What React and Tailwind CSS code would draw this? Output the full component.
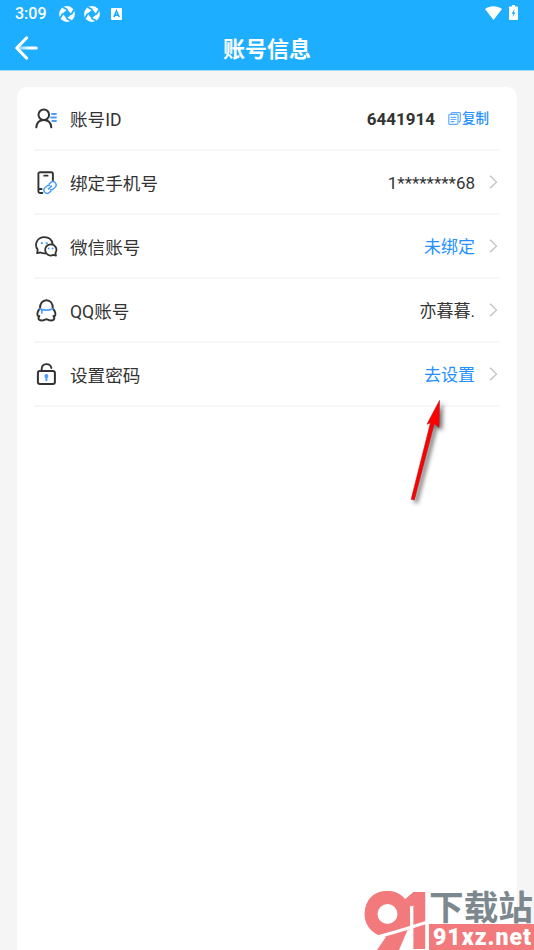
import React from 'react';

const UserIdIcon = () => (
  <svg className="w-6 h-6" viewBox="0 0 24 24" fill="none" strokeLinecap="round" aria-hidden>
    <g stroke="#333333" strokeWidth="2">
      <circle cx="9.800" cy="7.800" r="5.300" />
      <path d="M2.300 20.300c.5-4.500 3.300-7.200 7.500-7.200s7 2.700 7.500 7.200" />
    </g>
    <path d="M18 7h4M17 10.500h5M18.300 14h3.700" stroke="#4a9dfc" strokeWidth="1.800" />
  </svg>
);

const PhoneIcon = () => (
  <svg className="w-6 h-6" viewBox="0 0 24 24" fill="none" strokeLinecap="round" aria-hidden>
    <path d="M18.900 9.500V2.800a1.600 1.600 0 0 0-1.600-1.600H6a1.600 1.600 0 0 0-1.600 1.600v17.400A1.800 1.800 0 0 0 6.200 22h2.200M4.600 18h3" stroke="#333333" strokeWidth="1.900" />
    <path d="M10.200 4.700h3.400" stroke="#333333" strokeWidth="1.800" />
    <g stroke="#4a9dfc" strokeWidth="1.500" transform="rotate(-43 16 16.500)">
      <path d="M14.300 19.700h-2.200a3.200 3.200 0 0 1 0-6.400h2.600a3.200 3.200 0 0 1 2.600 1.300" />
      <path d="M17.700 13.300h2.200a3.200 3.200 0 0 1 0 6.400h-2.600a3.200 3.200 0 0 1-2.600-1.300" />
      <path d="M14 16.500h4" />
    </g>
  </svg>
);

const WechatIcon = () => (
  <svg className="w-6 h-6" viewBox="0 0 24 24" fill="none" strokeLinejoin="round" strokeLinecap="round" aria-hidden>
    <g stroke="#333333" strokeWidth="1.800">
      <path d="M12 18.300c-1.900.3-3.900.1-5.500-.8L3.100 18.200l.6-3.600C-.2 9.300 3.300 2.200 10.300 2.200c4.500 0 7.700 2.700 8.300 6.800" />
      <path d="M16.800 9.300a5.600 5.600 0 1 0 2.500 10.600l2.700.7-.6-2.500c2.600-4-.1-8.800-4.600-8.800z" fill="#fff" />
    </g>
    <g fill="#4a9dfc">
      <circle cx="7.800" cy="8.200" r="1.100" />
      <circle cx="12.800" cy="8.200" r="1.100" />
      <circle cx="14.700" cy="13.500" r="1" />
      <circle cx="18.600" cy="13.500" r="1" />
    </g>
  </svg>
);

const QQIcon = () => (
  <svg className="w-6 h-6" viewBox="0 0 24 24" fill="none" strokeLinejoin="round" strokeLinecap="round" aria-hidden>
    <path
      d="M6 9.300C6 4.400 8.500 1.300 12.400 1.300s6.400 3.100 6.400 8c1.900 2.300 2.900 5 2.500 6.800-.2 1-1 1.300-1.900.9 1 1.400 1.200 2.900.2 3.800-1.200 1-4.600.9-6-.2-.6-.4-1.800-.4-2.400 0-1.400 1.100-4.800 1.200-6 .2-1-.9-.8-2.400.2-3.800-.9.400-1.700.1-1.900-.9C3.100 14.300 4.100 11.600 6 9.300z"
      stroke="#333333"
      strokeWidth="1.900"
    />
    <path d="M6 9.900c3.800 1.500 9 1.500 12.800 0M7.800 11v3" stroke="#4a9dfc" strokeWidth="1.700" />
  </svg>
);

const LockIcon = () => (
  <svg className="w-6 h-6" viewBox="0 0 24 24" fill="none" strokeLinecap="round" aria-hidden>
    <rect x="3.900" y="8.100" width="17" height="12.800" rx="2" stroke="#333333" strokeWidth="2" />
    <path d="M7.700 7.700V5.800c.3-6.100 8.600-6.200 9.700-.8" stroke="#333333" strokeWidth="1.900" />
    <circle cx="12.400" cy="13" r="2" fill="#4a9dfc" />
    <path d="M12.400 13.500v3.800" stroke="#4a9dfc" strokeWidth="2" />
  </svg>
);

const CopyIcon = () => (
  <svg className="w-[13px] h-[13px]" viewBox="0 0 13 13" fill="none" stroke="#5fabff" aria-hidden>
    <path d="M3.300 2.200V1.600c0-.6.400-1 1-1h7c.6 0 1 .4 1 1v7.200l-1.600 1.700" strokeWidth="1.200" />
    <rect x=".8" y="2.400" width="9.200" height="10" rx="1.200" strokeWidth="1.200" />
    <path d="M2.700 5.400h5.500M2.700 7.500h5.500M2.700 9.600h3.800" strokeWidth="1.200" />
  </svg>
);

const Chevron = () => (
  <svg className="w-[9px] h-[14px] ml-[14px] mr-[2px] mb-[2px]" viewBox="0 0 9 14" fill="none" aria-hidden>
    <path d="M1 .8L7.500 7L1 13.200" stroke="#c4c4c4" strokeWidth="1.400" />
  </svg>
);

const ShutterIcon = () => (
  <svg className="w-4 h-4" viewBox="0 0 16 16" aria-hidden>
    <circle cx="8" cy="8" r="7.900" fill="#fff" />
    <path d="M8.500 3.500L12.500 8.500L7.500 12.500L3.500 7.500z" fill="#1eaeff" />
    <path d="M8.500 3.800L4 1.200M12.200 8.500L14.800 4M7.500 12.200L12 14.800M3.800 7.500L1.200 12" stroke="#1eaeff" strokeWidth="1.700" />
  </svg>
);

const rows = [
  { icon: <PhoneIcon />, label: '绑定手机号', value: '1********68' },
  { icon: <WechatIcon />, label: '微信账号', value: '未绑定', action: true },
  { icon: <QQIcon />, label: 'QQ账号', value: '亦暮暮.' },
  { icon: <LockIcon />, label: '设置密码', value: '去设置', action: true },
];

function StatusBar() {
  return (
    <div className="flex items-center h-7 pl-[15px] pr-[15px] text-white">
      <span className="w-[32px] text-[16px] font-medium leading-7">3:09</span>
      <div className="flex items-center gap-[9px] ml-3">
        <ShutterIcon />
        <ShutterIcon />
      </div>
      <svg className="w-[11px] h-3 ml-[11px]" viewBox="0 0 11 12" aria-hidden>
        <rect width="11" height="12" rx="1" fill="#fff" />
        <path d="M2.800 9L5.500 3L8.200 9M3.700 7.200h3.600" fill="none" stroke="#1eaeff" strokeWidth="1.700" />
      </svg>
      <svg className="w-[17px] h-[14px] ml-auto mb-[2px]" viewBox="0 0 17 14" aria-hidden>
        <path d="M0 3.100C4.900-.7 12.100-.7 17 3.100L8.500 14z" fill="#fff" />
      </svg>
      <svg className="w-[9px] h-[15px] ml-[7px] mr-[1px] mb-[3px]" viewBox="0 0 9 15" aria-hidden>
        <path d="M3 0h3v1.500h2c.6 0 1 .4 1 1V14c0 .6-.4 1-1 1H1c-.6 0-1-.4-1-1V2.500c0-.6.4-1 1-1h2z" fill="#fff" />
        <path d="M5.600 4L2.600 8.700h1.700L3.500 12.300L6.500 7.500H4.900z" fill="#1eaeff" />
      </svg>
    </div>
  );
}

function Row({ icon, label, children }) {
  return (
    <div className="flex items-center h-16 pt-[2px] border-b-2 border-[#f7f7f7] text-[#333333]">
      {icon}
      <span className="ml-3 pt-[2px] text-[17.6px]">{label}</span>
      <div className="flex items-center ml-auto">{children}</div>
    </div>
  );
}

function Pointer() {
  return (
    <svg className="absolute left-[400px] top-[390px] w-[60px] h-[120px]" viewBox="0 0 60 120" aria-hidden>
      <g style={{ filter: 'drop-shadow(3px 3px 2px rgba(0,0,0,0.55))' }}>
        <path d="M39.500 10.500L39 37.500L34.300 33.500L14.300 110L11.200 109.300L30.500 32.800L27 34.200z" fill="#ff0000" stroke="#b01010" strokeWidth=".6" />
      </g>
    </svg>
  );
}

function Watermark() {
  return (
    <svg className="absolute left-[360px] top-[886px] w-[174px] h-16" viewBox="0 0 174 64" aria-hidden>
      <text x="3" y="63" textLength="50" lengthAdjust="spacingAndGlyphs" className="font-['Inter'] font-black text-[78px]" fill="#f27a7c">9</text>
      {/* clears the lower hook so the tail reads as one straight stroke */}
      <path d="M0 44H52V64H0z" fill="#fff" />
      <circle cx="27.500" cy="28" r="16.500" fill="#fff" stroke="#f27a7c" strokeWidth="13" />
      <path d="M30 45L51 36L39 64H17z" fill="#f27a7c" />
      <text x="41" y="63" textLength="27" lengthAdjust="spacingAndGlyphs" className="font-['Inter'] font-black text-[78px]" fill="#f27a7c">1</text>
      <path d="M4 54.500Q34 47 69 35.500" stroke="#fff" strokeWidth="3" fill="none" />
      <path d="M51 20V50L46 64" stroke="#fff" strokeWidth="1.800" fill="none" />
      <text x="69" y="34" textLength="104" lengthAdjust="spacingAndGlyphs" className="font-['Noto_Sans_CJK_SC'] font-bold text-[34px]" fill="#7c888e">下载站</text>
      <rect x="69" y="38" width="105" height="26" fill="#f27a7c" />
      <text x="73" y="59" textLength="98" lengthAdjust="spacing" className="font-['Roboto'] font-black text-[23px]" fill="#fff">91xz.net</text>
    </svg>
  );
}

export default function App() {
  return (
    <div className="relative flex flex-col w-[534px] h-[950px] overflow-hidden bg-[#f5f5f5] font-['Roboto','Noto_Sans_CJK_SC',sans-serif]">
      <header className="h-[70px] shrink-0 bg-[#1eaeff] shadow-[0_1px_0_#a5dcfa]">
        <StatusBar />
        <div className="grid grid-cols-3 items-center h-10 px-[15px]">
          <svg className="w-6 h-6" viewBox="0 0 24 24" fill="none" strokeWidth="3.200" strokeLinecap="round" aria-label="返回">
            <defs>
              <linearGradient id="shaft" gradientUnits="userSpaceOnUse" x1="4" y1="0" x2="15" y2="0">
                <stop stopColor="#8ad5ff" />
                <stop offset="1" stopColor="#fff" />
              </linearGradient>
            </defs>
            <path d="M3 12.010L21.200 12" stroke="url(#shaft)" />
            <path d="M11.500 2L1.800 12L11.500 22" stroke="#fff" strokeLinejoin="round" />
          </svg>
          <h1 className="pt-[2px] text-center text-[22px] font-bold text-white whitespace-nowrap">账号信息</h1>
        </div>
      </header>

      <main className="flex-1 mt-[17px] mx-[17px] px-[17px] bg-white rounded-t-[10px]">
        <Row icon={<UserIdIcon />} label="账号ID">
          <span className="pt-px text-[17px] font-bold">6441914</span>
          <button type="button" className="flex items-center gap-[1px] ml-[13px] mr-[11px] mb-px text-[13.500px] font-medium text-[#2490ff]">
            <CopyIcon />
            复制
          </button>
        </Row>
        {rows.map((row) => (
          <Row key={row.label} icon={row.icon} label={row.label}>
            <span className={row.action ? 'pt-[2px] text-[17px] text-[#2490ff]' : 'pt-[2px] text-[17px]'}>{row.value}</span>
            <Chevron />
          </Row>
        ))}
      </main>

      <Pointer />
      <Watermark />
    </div>
  );
}
